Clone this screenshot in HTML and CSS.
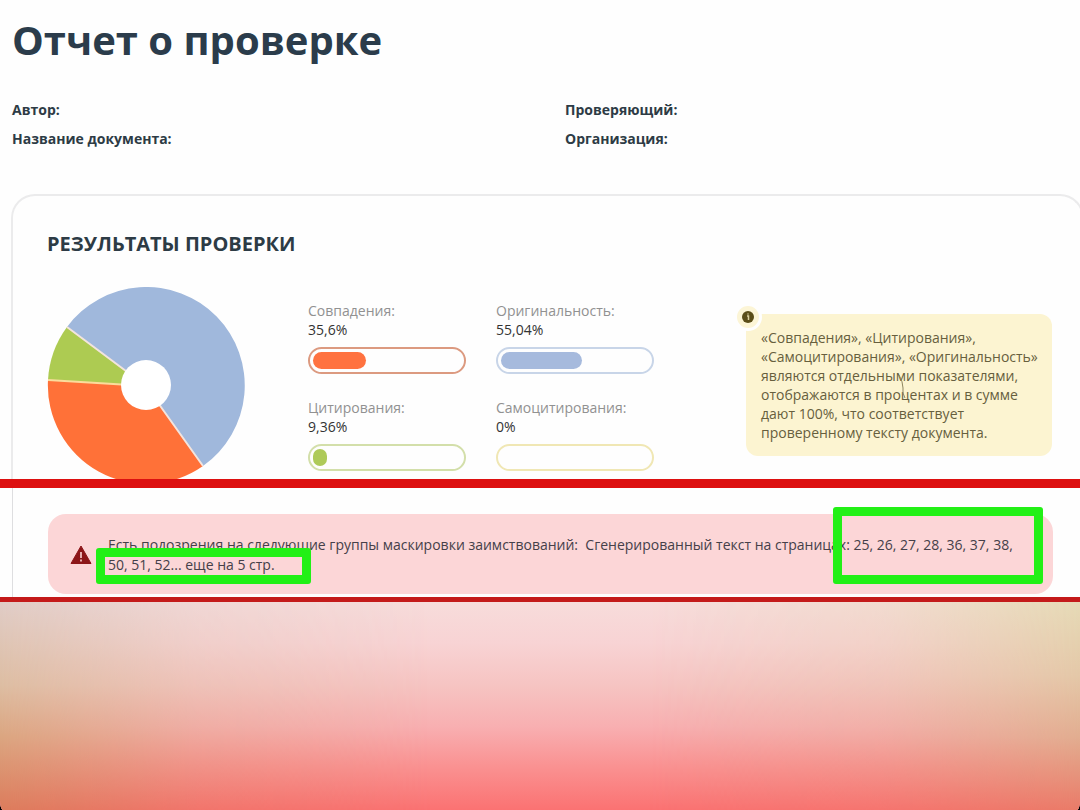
FILE: index.html
```html
<!DOCTYPE html>
<html lang="ru">
<head>
  <meta charset="UTF-8" />
  <meta name="viewport" content="width=device-width, initial-scale=1.0"/>
  <title>Отчет о проверке</title>
  <link rel="stylesheet" href="styles.css">
</head>
<body>
  <div class="page">

    <header>
      <h1>Отчет о проверке</h1>
      <div class="meta">
        <span>Автор:</span>
        <span>Проверяющий:</span>
        <span>Название документа:</span>
        <span>Организация:</span>
      </div>
    </header>

    <main>
      <section class="card">
        <h2>РЕЗУЛЬТАТЫ ПРОВЕРКИ</h2>
        <div class="results">
          <svg class="pie" viewBox="0 0 198 198" role="img" aria-label="Диаграмма результатов">
            <path fill="#a0b8dc" d="M99 99 L20 40 A98.500 98.500 0 1 1 156 179 Z"/>
            <path fill="#ff7138" d="M99 99 L156 179 A98.500 98.500 0 0 1 1 93 Z"/>
            <path fill="#adcb52" d="M99 99 L1 93 A98.500 98.500 0 0 1 20 40 Z"/>
            <path d="M99 99 L20 40 M99 99 L156 179" stroke="#f3e4dd" stroke-width="2"/>
            <path d="M99 99 L1 93" stroke="#fbdc9c" stroke-width="2"/>
            <circle cx="99" cy="98" r="25" fill="#fff"/>
          </svg>

          <div class="metrics">
            <div class="metric orange">
              <span class="label">Совпадения:</span>
              <span class="value">35,6%</span>
              <div class="bar"><div class="fill" style="width: 35.6%"></div></div>
            </div>
            <div class="metric blue">
              <span class="label">Оригинальность:</span>
              <span class="value">55,04%</span>
              <div class="bar"><div class="fill" style="width: 55.04%"></div></div>
            </div>
            <div class="metric green">
              <span class="label">Цитирования:</span>
              <span class="value">9,36%</span>
              <div class="bar"><div class="fill" style="width: 9.36%"></div></div>
            </div>
            <div class="metric yellow">
              <span class="label">Самоцитирования:</span>
              <span class="value">0%</span>
              <div class="bar"><div class="fill" style="width: 0%"></div></div>
            </div>
          </div>

          <aside class="note">
            <svg class="note-icon" viewBox="0 0 28 28" aria-hidden="true">
              <circle cx="14" cy="14" r="14" fill="#fefefe"/>
              <circle cx="14" cy="14" r="11" fill="#fcf5d6"/>
              <circle cx="14" cy="14" r="6" fill="#5a4d18"/>
              <path d="M13 13h1.500v4M14 10.500v1" stroke="#d9cf9e" stroke-width="1.500" fill="none"/>
            </svg>
            <p>«Совпадения», «Цитирования»,<br>
            «Самоцитирования», «Оригинальность»<br>
            являются отдельными показателями,<br>
            отображаются в процентах и в сумме<br>
            дают 100%, что соответствует<br>
            проверенному тексту документа.</p>
            <svg class="note-mark" viewBox="0 0 8 26" aria-hidden="true">
              <path d="M1 1 Q5 8 5 14 Q4 19 7 24" stroke="#8d8560" fill="none"/>
            </svg>
          </aside>
        </div>
      </section>

      <section class="strip">
        <div class="strip-inner">
          <div class="alert">
            <svg class="alert-icon" viewBox="0 0 22 20" aria-hidden="true">
              <path d="M11 1 L21 18.500 H1 Z" fill="#8c1518" stroke="#8c1518" stroke-width="1" stroke-linejoin="round"/>
              <path d="M11 7v6M11 14.500v2" stroke="#fbd5d6" stroke-width="1.600"/>
            </svg>
            <p>Есть подозрения на следующие группы маскировки заимствований:&nbsp; Сгенерированный текст на страницах: 25, 26, 27, 28, 36, 37, 38,<br>
            50, 51, 52... еще на 5 стр.</p>
            <div class="mark mark-left"></div>
            <div class="mark mark-right"></div>
          </div>
        </div>
      </section>
    </main>

    <footer></footer>
  </div>
</body>
</html>
```
FILE: styles.css
```css
* {
  box-sizing: border-box;
}

html {
  background: #000;
}

body {
  margin: 0;
  font-family: "Open Sans", "Noto Sans", sans-serif;
  font-size: 14px;
  color: #2d3b45;
}

h1, h2, p {
  margin: 0;
}

.page {
  display: flex;
  flex-direction: column;
  min-height: 100vh;
  background: #fefefe;
  border-radius: 0 0 3px 3px / 0 0 10px 10px;
  overflow: hidden;
}

header {
  padding: 13px 12px 41px;
}

h1 {
  font-size: 40px;
  line-height: 54px;
  color: #2b3c4b;
}

.meta {
  display: grid;
  grid-template-columns: 553px 1fr;
  margin-top: 28px;
  line-height: 29px;
  font-weight: 700;
}

/* results */
.card {
  margin: 0 -4px 0 11px;
  padding: 34px 30px 0 34px;
  border: 2px solid #ebebec;
  border-bottom: 0;
  border-radius: 24px 24px 0 0;
}

h2 {
  font-size: 20px;
  line-height: 28px;
}

.results {
  display: flex;
  align-items: flex-start;
  margin-top: 29px;
}

.pie {
  flex: none;
  width: 198px;
  height: 198px;
  margin-bottom: -6px;
}

.metrics {
  display: grid;
  grid-template-columns: 158px 158px;
  gap: 24px 30px;
  margin: 14px 0 -8px 63px;
}

.metric {
  display: flex;
  flex-direction: column;
  line-height: 19px;
}

.label {
  color: #919191;
  white-space: nowrap;
}

.value {
  color: #333;
}

.bar {
  height: 27px;
  margin-top: 8px;
  padding: 3px;
  border: 2px solid;
  border-radius: 14px;
}

.fill {
  height: 17px;
  border-radius: 9px;
}

.orange .bar { border-color: #dc9a80; }
.orange .fill { background: #ff7240; }
.blue .bar { border-color: #c8d5e8; }
.blue .fill { background: #a6badd; }
.green .bar { border-color: #d3dfaa; }
.green .fill { background: #aeca59; }
.yellow .bar { border-color: #f0e7b4; }

.note {
  position: relative;
  width: 306px;
  margin: 27px 0 0 auto;
  padding: 14px 0 14px 15px;
  border-radius: 12px;
  background: #fcf4d1;
  color: #675f3e;
  line-height: 19px;
  white-space: nowrap;
}

.note-icon {
  position: absolute;
  top: -11px;
  left: -12px;
  width: 28px;
}

.note-mark {
  position: absolute;
  top: 60px;
  left: 152px;
  width: 8px;
}

/* alert between the red lines */
.strip {
  position: relative;
  padding-left: 12px;
  border-top: 9px solid #dd1010;
  border-bottom: 5px solid #c41a1a;
  background: #fefefe;
}

.strip-inner {
  padding: 26px 27px 3px 35px;
  border-left: 1px solid #dedee0;
}

.alert {
  position: relative;
  display: flex;
  align-items: center;
  gap: 16px;
  padding: 21px 0 19px 22px;
  border-radius: 18px;
  background: #fcd6d7;
  color: #454049;
  line-height: 20px;
  white-space: nowrap;
}

.alert-icon {
  flex: none;
  width: 22px;
  height: 20px;
}

.mark {
  position: absolute;
  border: 9px solid #22f016;
  border-radius: 3px;
}

.mark-left {
  left: 48px;
  top: 34px;
  width: 215px;
  height: 36px;
}

.mark-right {
  right: 10px;
  top: -7px;
  width: 210px;
  height: 77px;
}

footer {
  display: flex;
  justify-content: space-between;
  flex: 1;
  min-height: 200px;
  background: linear-gradient(#f7dcdb, #f8d3d4 20%, #f6c4c2 40%, #f8afb1 60%, #fa9090 80%, #fb7272);
}

footer::before,
footer::after {
  content: "";
  width: 40%;
}

footer::before {
  background: linear-gradient(#e0ccc6, #ddbda2 40%, #dba580 65%, #dc7c5c);
  mask-image: linear-gradient(to right, #000, rgba(0, 0, 0, 0.3) 45%, transparent);
}

footer::after {
  background: linear-gradient(#e6dab6, #e4c8a8 35%, #e2ad90 65%, #ea7b68);
  mask-image: linear-gradient(to left, #000, rgba(0, 0, 0, 0.3) 45%, transparent);
}
```
